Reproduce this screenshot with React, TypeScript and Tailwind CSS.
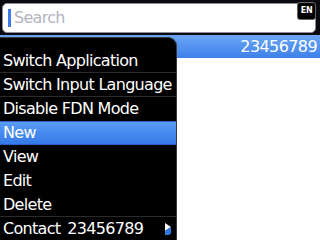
import React from "react";

const Row = ({ label, sep = false, active = false }: { label: string; sep?: boolean; active?: boolean }) => (
  <div
    className={
      "h-[24px] flex items-center pl-[3px] text-[16px] tracking-[-0.7px] leading-none " +
      (active
        ? "bg-gradient-to-b from-[#5b9bf5] to-[#3479e8] text-white border-y border-[#2a62c8]"
        : "text-white") +
      (sep ? " border-b border-[#2b2b2e]" : "")
    }
  >
    {label}
  </div>
);

export default function App() {
  return (
    <div
      className="relative w-[320px] h-[240px] overflow-hidden bg-white flex flex-col"
      style={{ fontFamily: "'DejaVu Sans', sans-serif" }}
    >
      {/* header */}
      <div className="h-[35px] bg-[#0a0a10] pt-[3px] px-[2px] shrink-0">
        <div className="h-[30px] w-[314px] rounded-[5px] bg-white border border-[#8e8e96] flex items-center pl-[5px]">
          <div className="w-[3px] h-[18px] bg-[#3f7ae8] mr-[3px]" />
          <span className="text-[16px] tracking-[-0.7px] text-[#b4b4bf] leading-none">Search</span>
        </div>
      </div>
      {/* EN badge */}
      <div className="absolute left-[297px] top-[2px] w-[19px] h-[18px] rounded-[3px] bg-black border border-[#666] flex items-center justify-center">
        <span className="text-[8px] font-bold text-white leading-none tracking-[-0.3px]">EN</span>
      </div>
      {/* selected row */}
      <div className="h-[23px] shrink-0 bg-gradient-to-b from-[#6aa6f5] to-[#3d80ea] flex items-center justify-end pr-[3px]">
        <span className="text-[16px] tracking-[-0.6px] text-white leading-none">23456789</span>
      </div>
      <div className="flex-1 bg-white" />

      {/* menu */}
      <div className="absolute left-0 top-[37px] w-[177px] h-[210px] bg-black rounded-tr-[9px] border-r border-t border-[#3a3a3e] pt-[11px] flex flex-col">
        <Row label="Switch Application" sep />
        <Row label="Switch Input Language" sep />
        <Row label="Disable FDN Mode" />
        <Row label="New" active />
        <Row label="View" />
        <Row label="Edit" />
        <Row label="Delete" sep />
        <div className="h-[24px] flex items-center pl-[3px] text-[16px] tracking-[-0.7px] leading-none text-white relative">
          <span>Contact</span>
          <span className="ml-[7px]">23456789</span>
          <svg className="absolute left-[163px] top-[5px]" width="10" height="14" viewBox="0 0 10 14">
            <path d="M2 1 L8 5 L2 9 Z" fill="#ffffff" />
            <path d="M2 9 L8 5 L8 10 Q8 13 5 13 L2 13 Z" fill="#2f78e0" />
          </svg>
        </div>
      </div>
    </div>
  );
}
